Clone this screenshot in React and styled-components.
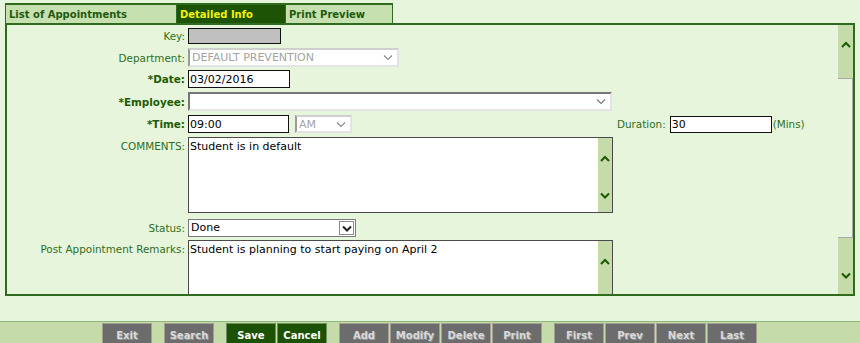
import React from 'react'
import styled, {createGlobalStyle} from 'styled-components'

const GlobalStyle = createGlobalStyle`
  html, body {
    margin: 0;
    padding: 0;
  }
  body {
    background: #e6f5dc;
    font-family: "DejaVu Sans", Verdana, sans-serif;
  }
`

const Page = styled.div`
  width: 860px;
  height: 343px;
  overflow: hidden;
  display: flex;
  flex-direction: column;
`

const TabBar = styled.div`
  display: flex;
  padding: 3px 0 0 5px;
  flex-shrink: 0;
`

const Tab = styled.div`
  box-sizing: border-box;
  width: ${p => p.$width}px;
  height: 20px;
  padding-left: 3px;
  border-top: 2px solid #2e6b1e;
  border-left: 1px solid #2e6b1e;
  &:last-child {
    border-right: 1px solid #2e6b1e;
  }
  background: ${p => (p.$active ? '#1d5304' : '#c6e0b0')};
  color: ${p => (p.$active ? '#f2f200' : '#1f5a0e')};
  font-size: 10px;
  font-weight: bold;
  line-height: 19px;
  white-space: nowrap;
`

const Panel = styled.div`
  margin: 0 5px;
  height: 273px;
  box-sizing: border-box;
  border: 2px solid #2e6b1e;
  display: flex;
  overflow: hidden;
  flex-shrink: 0;
`

const Form = styled.div`
  flex: 1;
  min-width: 0;
  padding-top: 3px;
  display: flex;
  flex-direction: column;
  overflow: hidden;
`

const Row = styled.div`
  display: flex;
  align-items: ${p => (p.$top ? 'flex-start' : 'center')};
  margin-top: ${p => p.$gap || 0}px;
  flex-shrink: 0;
`

const Label = styled.div`
  width: 178px;
  margin-right: 3px;
  padding-top: ${p => (p.$top ? 3 : 0)}px;
  text-align: right;
  font-size: 10.4px;
  font-weight: ${p => (p.$req ? 'bold' : 'normal')};
  color: ${p => (p.$req ? '#1e5c08' : '#2f6f1f')};
  white-space: nowrap;
`

const TextInput = styled.input`
  box-sizing: border-box;
  width: ${p => p.$w}px;
  height: ${p => p.$h || 18}px;
  margin: 0;
  padding: 0 1px;
  border: 1px solid #111;
  border-radius: 0;
  background: ${p => (p.$locked ? '#c0c0c0' : '#fff')};
  font: 11px "DejaVu Sans", Verdana, sans-serif;
  color: #000;
  outline: none;
`

const SelectBox = styled.div`
  box-sizing: border-box;
  width: ${p => p.$w}px;
  height: ${p => p.$h || 19}px;
  margin-left: ${p => p.$ml || 0}px;
  padding: 0 4px 0 2px;
  display: flex;
  align-items: center;
  justify-content: space-between;
  background: #fff;
  border-style: solid;
  border-width: 2px;
  border-top-color: ${p => (p.$disabled ? '#cfcfcf' : '#767676')};
  border-left-color: ${p => (p.$disabled ? '#9a9a9a' : '#767676')};
  border-right-color: #e4e4e4;
  border-bottom-color: #e4e4e4;
  font-size: 11px;
  color: ${p => (p.$disabled ? '#a3a3a3' : '#000')};
  white-space: nowrap;
`

const ClassicSelect = styled.div`
  box-sizing: border-box;
  width: ${p => p.$w}px;
  height: 18px;
  display: flex;
  align-items: stretch;
  background: #fff;
  border: 1px solid #7a7a7a;
  font-size: 11px;
  color: #000;
`

const ClassicValue = styled.div`
  flex: 1;
  padding-left: 2px;
  line-height: 16px;
`

const DropButton = styled.div`
  box-sizing: border-box;
  width: 15px;
  margin: 1px;
  border: 1px solid #8c8c8c;
  display: flex;
  align-items: center;
  justify-content: center;
  background: #fff;
`

const Memo = styled.div`
  box-sizing: border-box;
  width: 425px;
  height: ${p => p.$h}px;
  display: flex;
  background: #fff;
  border: 1px solid #4a4a4a;
  flex-shrink: 0;
`

const MemoText = styled.div`
  flex: 1;
  padding: 2px 1px;
  font-size: 11px;
  line-height: 14px;
  color: #000;
`

const MemoScroll = styled.div`
  width: 14px;
  background: #c5dcaa;
  display: flex;
  flex-direction: column;
`

const ArrowButton = styled.div`
  height: ${p => p.$h}px;
  flex-shrink: 0;
  display: flex;
  align-items: center;
  justify-content: center;
`

const DurationGroup = styled.div`
  margin-left: 265px;
  display: flex;
  align-items: center;
`

const InlineLabel = styled.span`
  margin-right: 4px;
  font-size: 10.4px;
  color: #2f6f1f;
`

const Unit = styled.span`
  margin-left: 1px;
  font-size: 10.4px;
  color: #2f6f1f;
`

const Scroller = styled.div`
  width: 15px;
  flex-shrink: 0;
  background: #c5dcaa;
  display: flex;
  flex-direction: column;
`

const Track = styled.div`
  flex: ${p => (p.$fill ? 1 : `0 0 ${p.$h}px`)};
`

const Thumb = styled.div`
  box-sizing: border-box;
  height: 160px;
  flex-shrink: 0;
  background: #e6f5dc;
  border-top: 1px solid #a8a8a8;
  border-bottom: 1px solid #a8a8a8;
  border-right: 1px solid #a8a8a8;
`

const Toolbar = styled.div`
  margin-top: 25px;
  flex: 1;
  background: #c5dcaa;
  border-top: 1px solid #8db77a;
  padding: 1px 0 0 102px;
  display: flex;
  gap: 12px;
`

const ButtonGroup = styled.div`
  display: flex;
  gap: 1px;
`

const Button = styled.div`
  box-sizing: border-box;
  width: 50px;
  height: 24px;
  background: ${p => (p.$primary ? '#1c5204' : '#6c6c6c')};
  border: 1px solid ${p => (p.$primary ? '#6f8f60' : '#a29f90')};
  color: ${p => (p.$primary ? '#fff' : '#d9d9d9')};
  text-shadow: ${p => (p.$primary ? 'none' : '1px 1px 0 #989898')};
  font-size: 10px;
  font-weight: bold;
  text-align: center;
  line-height: 23px;
`

const Chevron = ({dir = 'up', color = '#1a5a00', thin}) => (
  <svg width="10" height="7" viewBox="0 0 10 7">
    <polyline
      points={dir === 'up' ? '1,6 5,2 9,6' : '1,1.5 5,5.5 9,1.5'}
      fill="none"
      stroke={color}
      strokeWidth={thin ? 1.2 : 2}
    />
  </svg>
)

const buttonGroups = [
  [{label: 'Exit'}],
  [{label: 'Search'}],
  [{label: 'Save', primary: true}, {label: 'Cancel', primary: true}],
  [{label: 'Add'}, {label: 'Modify'}, {label: 'Delete'}, {label: 'Print'}],
  [{label: 'First'}, {label: 'Prev'}, {label: 'Next'}, {label: 'Last'}]
]

const App = () => {
  return (
    <Page>
      <GlobalStyle />
      <TabBar>
        <Tab $width={171}>List of Appointments</Tab>
        <Tab $width={109} $active>
          Detailed Info
        </Tab>
        <Tab $width={108}>Print Preview</Tab>
      </TabBar>

      <Panel>
        <Form>
          <Row>
            <Label>Key:</Label>
            <TextInput $w={93} $h={16} $locked readOnly value="" />
          </Row>
          <Row $gap={4}>
            <Label>Department:</Label>
            <SelectBox $w={211} $disabled>
              DEFAULT PREVENTION
              <Chevron dir="down" color="#8a8a8a" thin />
            </SelectBox>
          </Row>
          <Row $gap={3}>
            <Label $req>*Date:</Label>
            <TextInput $w={102} readOnly value="03/02/2016" />
          </Row>
          <Row $gap={4}>
            <Label $req>*Employee:</Label>
            <SelectBox $w={424}>
              <span />
              <Chevron dir="down" color="#7a7a7a" thin />
            </SelectBox>
          </Row>
          <Row $gap={4}>
            <Label $req>*Time:</Label>
            <TextInput $w={101} readOnly value="09:00" />
            <SelectBox $w={57} $h={18} $ml={6} $disabled>
              AM
              <Chevron dir="down" color="#8a8a8a" thin />
            </SelectBox>
            <DurationGroup>
              <InlineLabel>Duration:</InlineLabel>
              <TextInput $w={102} $h={17} readOnly value="30" />
              <Unit>(Mins)</Unit>
            </DurationGroup>
          </Row>
          <Row $gap={4} $top>
            <Label $top>COMMENTS:</Label>
            <Memo $h={76}>
              <MemoText>Student is in default</MemoText>
              <MemoScroll>
                <ArrowButton $h={40}>
                  <Chevron dir="up" />
                </ArrowButton>
                <ArrowButton $h={34}>
                  <Chevron dir="down" />
                </ArrowButton>
              </MemoScroll>
            </Memo>
          </Row>
          <Row $gap={6}>
            <Label>Status:</Label>
            <ClassicSelect $w={168}>
              <ClassicValue>Done</ClassicValue>
              <DropButton>
                <Chevron dir="down" color="#222" />
              </DropButton>
            </ClassicSelect>
          </Row>
          <Row $gap={3} $top>
            <Label $top>Post Appointment Remarks:</Label>
            <Memo $h={76}>
              <MemoText>Student is planning to start paying on April 2</MemoText>
              <MemoScroll>
                <ArrowButton $h={40}>
                  <Chevron dir="up" />
                </ArrowButton>
              </MemoScroll>
            </Memo>
          </Row>
        </Form>

        <Scroller>
          <ArrowButton $h={38}>
            <Chevron dir="up" />
          </ArrowButton>
          <Track $h={15} />
          <Thumb />
          <Track $fill />
          <ArrowButton $h={38}>
            <Chevron dir="down" />
          </ArrowButton>
        </Scroller>
      </Panel>

      <Toolbar>
        {buttonGroups.map((group, i) => (
          <ButtonGroup key={i}>
            {group.map(b => (
              <Button key={b.label} $primary={b.primary}>
                {b.label}
              </Button>
            ))}
          </ButtonGroup>
        ))}
      </Toolbar>
    </Page>
  )
}

export default App
